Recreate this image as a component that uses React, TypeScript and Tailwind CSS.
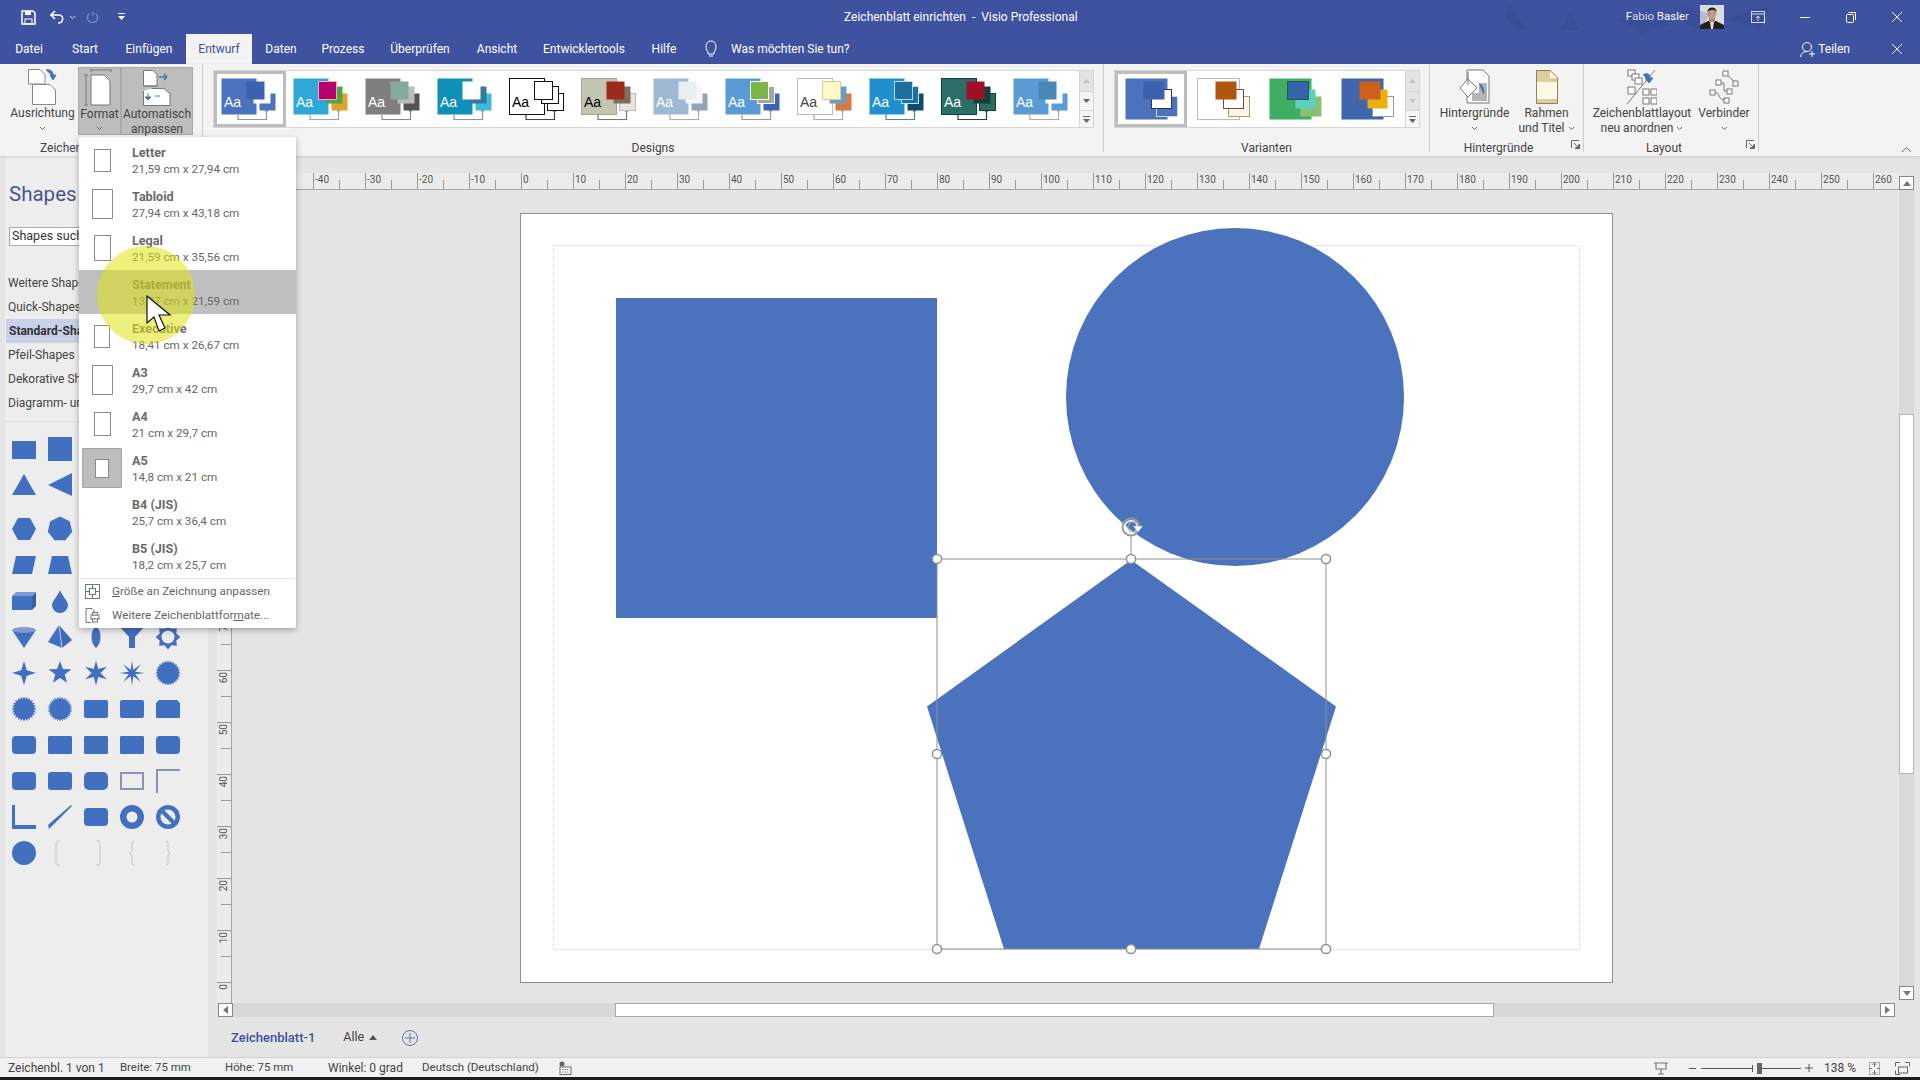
import React from "react";

const BLUE = "#4a72bd";
const PANEL = "#4270c0";

function starPts(n: number, R: number, r: number, c = 12, rot = -Math.PI / 2) {
  const out: string[] = [];
  for (let i = 0; i < n * 2; i++) {
    const a = rot + (i * Math.PI) / n;
    const q = i % 2 === 0 ? R : r;
    out.push(`${(c + q * Math.cos(a)).toFixed(2)},${(c + q * Math.sin(a)).toFixed(2)}`);
  }
  return out.join(" ");
}
function polyPts(n: number, R: number, c = 12) {
  const out: string[] = [];
  for (let i = 0; i < n; i++) {
    const a = -Math.PI / 2 + (i * 2 * Math.PI) / n;
    out.push(`${(c + R * Math.cos(a)).toFixed(2)},${(c + R * Math.sin(a)).toFixed(2)}`);
  }
  return out.join(" ");
}

const R = (rx: number, y = 3, h = 18) => <rect x="0" y={y} width="24" height={h} rx={rx} fill={PANEL} />;
const Pg = (p: string) => <polygon points={p} fill={PANEL} />;

const topShapes: React.ReactNode[] = [
  R(0, 4, 18), R(0, 0, 24), R(0), R(0), R(0),
  Pg("12,1 24,22 0,22"), Pg("24,0 24,23 0,12"), Pg("12,1 24,22 0,22"), R(0), R(0),
];
const shapes: React.ReactNode[] = [
  Pg("6,1 18,1 24,12 18,23 6,23 0,12"), Pg(polyPts(7, 12.5)), R(0), R(0), R(0),
  Pg("4,3 24,3 20,21 0,21"), Pg("4,3 20,3 24,21 0,21"), R(0), R(0), R(0),
  <g><polygon points="0,7 20,7 20,21 0,21" fill={PANEL} /><polygon points="0,7 4,3 24,3 20,7" fill="#7d9ad6" /><polygon points="20,7 24,3 24,17 20,21" fill="#3560a8" /></g>,
  <path d="M12 1 C14 7 20 12 20 16 A8 8 0 0 1 4 16 C4 12 10 7 12 1Z" fill={PANEL} />, R(0), R(0), R(0),
  <g><polygon points="0,5 24,5 12,23" fill={PANEL} /><ellipse cx="12" cy="5" rx="12" ry="3" fill="#7d9ad6" /></g>,
  <g><polygon points="11,0 0,17 14,23" fill={PANEL} /><polygon points="11,0 14,23 24,15" fill="#3f6ab8" /><line x1="11" y1="0" x2="14" y2="23" stroke="#fff" strokeWidth="0.6" /></g>,
  <path d="M12 1 C18 6 18 18 12 23 C6 18 6 6 12 1Z" fill={PANEL} />,
  <polygon points="0,2 24,2 15,12 15,23 9,23 9,12" fill={PANEL} />,
  <g><polygon points={starPts(8, 12.5, 9)} fill={PANEL} /><circle cx="12" cy="12" r="6.5" fill="#ececec" /></g>,
  Pg(starPts(4, 12, 4)), Pg(starPts(5, 12, 5)), Pg(starPts(6, 12.5, 4.5)), Pg(starPts(8, 12.5, 3.5)), Pg(starPts(24, 12.5, 10.5)),
  Pg(starPts(24, 12.5, 10)), Pg(starPts(32, 12.5, 10)), R(2), R(2), <path d="M3 3H21L24 6V21H0V6Z" fill={PANEL} />,
  R(4), R(1), R(1), R(1), R(4),
  R(4), R(3), R(5),
  <rect x="1" y="4" width="22" height="16" fill="none" stroke="#8b92b8" strokeWidth="2" />,
  <path d="M1 24V1H24" fill="none" stroke="#8b92b8" strokeWidth="2" />,
  <polygon points="0,0 3,0 3,20 24,20 24,24 0,24" fill={PANEL} />,
  <polygon points="23,0 24,1 1,24 0,20" fill={PANEL} />,
  R(4),
  <g><circle cx="12" cy="12" r="12" fill={PANEL} /><circle cx="12" cy="12" r="5.5" fill="#ececec" /></g>,
  <g><circle cx="12" cy="12" r="12" fill={PANEL} /><circle cx="12" cy="12" r="7.5" fill="#ececec" /><polygon points="5,8 8,5 19,16 16,19" fill={PANEL} /></g>,
  <circle cx="12" cy="12" r="12" fill={PANEL} />,
];

function Sym({ children }: { children: React.ReactNode }) {
  return (
    <div className="flex h-9 w-9 items-center justify-center">
      <svg width="24" height="24" viewBox="0 0 24 24" overflow="visible">{children}</svg>
    </div>
  );
}

type T = { m: string; ms?: string; a: string; b: string; c: string; as?: string; bs?: string; cs?: string; t: string; l: string };
const themes: T[] = [
  { m: "#4a72bd", a: "#3c62ad", b: "#ffffff", c: "#4a72bd", t: "#fff", l: "#8a96b0" },
  { m: "#2ea8d8", a: "#b5006e", as: "#f3a8d0", b: "#4ea83f", c: "#e2a32a", t: "#fff", l: "#8fa9b5" },
  { m: "#7f7f7f", a: "#84aa9d", b: "#b9bdb9", c: "#545454", t: "#fff", l: "#888" },
  { m: "#1090b8", a: "#ffffff", b: "#2c7d9a", c: "#3dbbdc", t: "#fff", l: "#7f9aa5" },
  { m: "#ffffff", ms: "#111", a: "#ffffff", as: "#111", b: "#ffffff", bs: "#111", c: "#ffffff", cs: "#111", t: "#000", l: "#444" },
  { m: "#c3c5b0", ms: "#a5a595", a: "#9c2a1c", b: "#7a6f60", c: "#e9e5da", cs: "#bbb", t: "#000", l: "#777" },
  { m: "#9db9d4", a: "#e9eef3", b: "#f6f6f6", c: "#8ea5b9", t: "#fff", l: "#aaa" },
  { m: "#5b9bd5", a: "#79b547", as: "#fff", b: "#a5a5a5", bs: "#fff", c: "#4065b0", t: "#fff", l: "#999" },
  { m: "#ffffff", ms: "#bbb", a: "#fff8c8", as: "#d8d090", b: "#6c9cc4", c: "#d87a3c", t: "#444", l: "#aaa" },
  { m: "#1f8fcf", a: "#1c6f9f", as: "#a9e0f0", b: "#1c6f9f", bs: "#bfe8f5", c: "#0f4a6a", t: "#fff", l: "#5d7f90" },
  { m: "#2b6e68", ms: "#0f3f3a", a: "#a00f2a", b: "#12403c", c: "#2c6e58", cs: "#12403c", t: "#fff", l: "#2c3f3f" },
  { m: "#5b9bd5", a: "#4a86b8", b: "#ffffff", c: "#5b9bd5", t: "#fff", l: "#aaa" },
];

function Thumb({ th, selected }: { th: T; selected?: boolean }) {
  return (
    <div className={`flex h-[56px] w-[72px] shrink-0 items-center justify-center ${selected ? "border-[3px] border-[#bdbdbd]" : ""}`}>
      <svg width="72" height="56" viewBox="3 0 72 56" className={selected ? "-m-[3px]" : ""}>
        <rect x="10.5" y="7.5" width="35" height="36" fill={th.m} stroke={th.ms ?? "none"} />
        <path d="M27 43.5V48.5H55.5V39" fill="none" stroke={th.l} strokeWidth="1.2" />
        <polygon points="55.5,37 53.5,40.5 57.5,40.5" fill={th.l} />
        <rect x="48.5" y="22.5" width="16" height="17" fill={th.c} stroke={th.cs ?? "none"} />
        <rect x="42.5" y="15.5" width="17" height="17" fill={th.b} stroke={th.bs ?? "none"} />
        <rect x="35.5" y="10.5" width="18" height="18" fill={th.a} stroke={th.as ?? "none"} />
        <text x="13" y="36" fontSize="14" fill={th.t} fontFamily="Liberation Sans, sans-serif">Aa</text>
      </svg>
    </div>
  );
}

const variants = [
  { m: "#4a72bd", a: "#3c62ad", b: "#ffffff", bs: "#22346a", c: "#4a72bd", cs: "#cfd8ee" },
  { m: "#ffffff", ms: "#bbbbbb", a: "#b0560f", b: "#ffffff", bs: "#7a4a30", c: "#fff6e8", cs: "#a89c70" },
  { m: "#3fae60", a: "#3565a8", as: "#245a50", b: "#5fd0c0", c: "#8bc070" },
  { m: "#3f66ad", a: "#d0601c", b: "#e8b010", c: "#ffffff", cs: "#999" },
];
function Variant({ v, selected }: { v: (typeof variants)[number]; selected?: boolean }) {
  return (
    <div className={`h-[56px] w-[72px] shrink-0 ${selected ? "outline outline-[3px] -outline-offset-[3px] outline-[#bdbdbd]" : ""}`}>
      <svg width="72" height="56" viewBox="0 0 72 56">
        <rect x="10.5" y="7.5" width="42" height="41" fill={v.m} stroke={v.ms ?? "none"} />
        <rect x="41.5" y="25.5" width="21" height="20" fill={v.c} stroke={v.cs ?? "none"} />
        <rect x="36.5" y="18.5" width="20" height="19" fill={v.b} stroke={v.bs ?? "none"} />
        <rect x="28.5" y="10.5" width="21" height="18" fill={v.a} stroke={v.as ?? "none"} />
      </svg>
    </div>
  );
}

const Chev = ({ c = "#666" }: { c?: string }) => (
  <svg width="7" height="5" viewBox="0 0 7 5" className="inline-block"><path d="M1 1L3.5 3.5L6 1" fill="none" stroke={c} strokeWidth="1" /></svg>
);

function GalleryScroll({ dim }: { dim?: boolean }) {
  return (
    <div className="ml-auto flex h-full w-[14px] shrink-0 flex-col border-l border-[#d5d5d5] bg-[#f5f5f5]">
      <div className="flex h-[21px] items-center justify-center border-b border-[#d5d5d5] bg-[#e4e4e4]">
        <svg width="7" height="5"><polygon points="3.5,0 7,4 0,4" fill="#c4c4c4" /></svg>
      </div>
      <div className={`flex h-[19px] items-center justify-center border-b border-[#d5d5d5] ${dim ? "bg-[#e4e4e4]" : ""}`}>
        <svg width="7" height="5"><polygon points="0,0 7,0 3.5,4" fill={dim ? "#c4c4c4" : "#666"} /></svg>
      </div>
      <div className="flex flex-1 items-center justify-center">
        <svg width="7" height="7"><rect width="7" height="1" fill="#666" /><polygon points="0,3 7,3 3.5,7" fill="#666" /></svg>
      </div>
    </div>
  );
}

function Launcher() {
  return (
    <svg width="9" height="9" viewBox="0 0 9 9" className="absolute bottom-[3px] right-[3px]">
      <path d="M0.5 8V0.5H8M8.5 4V8.5H4M3 3L7.5 7.5M7.5 4.5V7.5H4.5" fill="none" stroke="#666" strokeWidth="1" />
    </svg>
  );
}

function BigBtn({ w, icon, l1, l2, chevInline, active }: { w: string; icon: React.ReactNode; l1: string; l2?: string; chevInline?: boolean; active?: boolean }) {
  return (
    <div className={`flex ${w} h-[68px] shrink-0 flex-col items-center ${active ? "border border-[#a9a9a9] bg-[#bdbdbd]" : ""}`}>
      <div className="mt-[2px] flex h-[36px] items-center justify-center">{icon}</div>
      <div className="mt-[1px] h-[15px] whitespace-nowrap leading-[15px]">{l1}</div>
      <div className="flex h-[14px] items-center gap-[3px] whitespace-nowrap leading-[14px]">
        {l2}
        {(!l2 || chevInline) && <Chev />}
      </div>
    </div>
  );
}

const paper = { fill: "#fff", stroke: "#777", strokeWidth: 1 };
const IcoAusrichtung = (
  <svg width="32" height="38" viewBox="0 0 32 38">
    <path d="M1.5 1.5H13L18 6.5V16H1.5Z" fill="#fff" stroke="#888" />
    <path d="M5.5 16.5H23L28.5 22V36.5H5.5Z" {...paper} stroke="#888" />
    <path d="M19 2C24 1 27 4 26 9M26 12L23 7H29Z" fill="#3d79b8" stroke="#3d79b8" />
  </svg>
);
const IcoFormat = (
  <svg width="32" height="38" viewBox="0 0 32 38">
    <path d="M7 1H27M7 0V3M27 0V3M2 6V36M0 6H4M0 36H4" stroke="#777" fill="none" />
    <path d="M7 6H20L26 12V36H7Z" {...paper} />
  </svg>
);
const IcoAuto = (
  <svg width="30" height="38" viewBox="0 0 30 38">
    <path d="M1.5 1.5H11L15 5.5V17H1.5Z" {...paper} />
    <path d="M1.5 17H15M9.5 19.5H22L28 25V36.5H1.5V22" fill="#fff" stroke="#777" />
    <path d="M17 8H25M25 8L22 5M25 8L22 11" stroke="#3d79b8" fill="none" strokeWidth="1.5" />
    <path d="M6 24V31M6 31L3 28H9Z" stroke="#3d79b8" fill="#3d79b8" strokeWidth="1" />
    <path d="M13 27H18" stroke="#3d79b8" />
  </svg>
);
const IcoHintergrund = (
  <svg width="32" height="36" viewBox="0 0 32 36">
    <path d="M8 1H24L30 7V34H8Z" fill="#fff" stroke="#777" />
    <g fill="#777"><rect x="20" y="14" width="8" height="18" opacity=".55" /><rect x="13" y="24" width="7" height="8" opacity=".55" /></g>
    <path d="M9 10L18 19L9 28L1 19Z" fill="#fff" stroke="#777" />
    <path d="M9 3V16" stroke="#777" />
    <path d="M20 14C24 16 26 20 25 26C23 22 21 18 20 14Z" fill="#3d79b8" />
  </svg>
);
const IcoRahmen = (
  <svg width="22" height="34" viewBox="0 0 22 34">
    <path d="M0.5 0.5H14L21.5 7.5V33.5H0.5Z" fill="#fdf9e6" stroke="#8b8360" />
    <rect x="1" y="8" width="20" height="4" fill="#ddcf9d" />
    <rect x="1" y="29" width="20" height="4" fill="#ddcf9d" />
    <rect x="1" y="1" width="13" height="7" fill="#ddcf9d" />
  </svg>
);
const IcoLayout = (
  <svg width="30" height="36" viewBox="0 0 30 36">
    <g fill="#fff" stroke="#777">
      <rect x="1" y="1" width="7" height="6" /><rect x="5" y="5" width="7" height="6" /><rect x="8" y="9" width="7" height="6" />
      <rect x="1" y="18" width="7" height="7" /><rect x="16" y="20" width="6" height="6" /><rect x="24" y="20" width="6" height="6" /><rect x="16" y="29" width="6" height="6" /><rect x="24" y="29" width="6" height="6" />
    </g>
    <path d="M0 35L28 1" stroke="#777" />
    <path d="M16 6C20 3 25 5 22 12M22 14L18 9H26Z" fill="#3d79b8" stroke="#3d79b8" />
  </svg>
);
const IcoVerbinder = (
  <svg width="30" height="34" viewBox="0 0 30 34">
    <g fill="#fff" stroke="#777">
      <rect x="14" y="1" width="5" height="5" /><rect x="24" y="11" width="5" height="5" /><rect x="7" y="10" width="5" height="5" /><rect x="18" y="19" width="5" height="5" /><rect x="1" y="20" width="5" height="5" /><rect x="15" y="28" width="5" height="5" />
    </g>
    <path d="M19 6L25 11M12 13H15V21H18M6 23C10 20 9 30 15 30" fill="none" stroke="#777" />
  </svg>
);

const tabs: [string, string, boolean?][] = [
  ["Datei", "w-[58px]"], ["Start", "w-[54px]"], ["Einfügen", "w-[74px]"], ["Entwurf", "w-[66px]", true], ["Daten", "w-[58px]"], ["Prozess", "w-[66px]"],
  ["Überprüfen", "w-[88px]"], ["Ansicht", "w-[66px]"], ["Entwicklertools", "w-[108px]"], ["Hilfe", "w-[52px]"],
];

const menu: [string, string, number, number][] = [
  ["Letter", "21,59 cm x 27,94 cm", 17, 23],
  ["Tabloid", "27,94 cm x 43,18 cm", 21, 30],
  ["Legal", "21,59 cm x 35,56 cm", 17, 26],
  ["Statement", "13,97 cm x 21,59 cm", 0, 0],
  ["Executive", "18,41 cm x 26,67 cm", 16, 23],
  ["A3", "29,7 cm x 42 cm", 21, 30],
  ["A4", "21 cm x 29,7 cm", 17, 24],
  ["A5", "14,8 cm x 21 cm", 14, 19],
  ["B4 (JIS)", "25,7 cm x 36,4 cm", 0, 0],
  ["B5 (JIS)", "18,2 cm x 25,7 cm", 0, 0],
];

const hTicks = Array.from({ length: 32 }, (_, i) => -50 + i * 10);
const vTicks = Array.from({ length: 16 }, (_, i) => 150 - i * 10);

const handles: [number, number][] = [
  [417, 346], [611, 346], [806, 346], [417, 541], [806, 541], [417, 736], [611, 736], [806, 736],
];

export default function App() {
  return (
    <div className="relative flex h-[1080px] w-[1920px] flex-col overflow-hidden bg-[#e5e5e5] font-['Roboto',sans-serif] text-[12px] text-[#444]">
      {/* Title bar */}
      <div className="relative flex h-[34px] shrink-0 items-center bg-[#3e529f] text-white">
        <div className="ml-[21px] flex items-center">
          <svg width="15" height="15" viewBox="0 0 15 15"><path d="M1 1H12L14 3V14H1Z" fill="none" stroke="#fff" strokeWidth="1.5" /><rect x="4" y="1" width="6" height="4" fill="#fff" /><rect x="4" y="9" width="7" height="5" fill="none" stroke="#fff" /></svg>
          <svg width="15" height="14" viewBox="0 0 15 14" className="ml-[14px]"><path d="M5 1L1 5L5 9M1 5H9C14 5 14 13 8 13" fill="none" stroke="#fff" strokeWidth="1.6" /></svg>
          <span className="ml-[4px]"><Chev c="#d5daf0" /></span>
          <svg width="13" height="14" viewBox="0 0 13 14" className="ml-[10px]"><path d="M7 1.5V5.5M9.5 3.5C13 6 12 12.5 6.5 12.5C1 12.5 0 6 3.5 3.5" fill="none" stroke="#7587c4" strokeWidth="1.5" /></svg>
          <svg width="7" height="8" viewBox="0 0 7 8" className="ml-[19px]"><rect width="7" height="1" fill="#fff" /><polygon points="0,3 7,3 3.5,7" fill="#fff" /></svg>
        </div>
        <div className="absolute left-[844px] top-[8px] whitespace-pre">Zeichenblatt einrichten  -  Visio Professional</div>
        <svg width="300" height="34" className="absolute left-[1480px] top-0 opacity-20">
          <path d="M30 5L45 28L38 32L25 15ZM80 30L90 12L100 30ZM140 20L170 8L190 25L160 34ZM200 4L230 14L220 30L205 24ZM245 18L290 6L280 30Z" fill="#2a3b80" />
        </svg>
        <div className="ml-auto flex items-center">
          <span className="text-[11.5px]">Fabio Basler</span>
          <svg width="24" height="24" viewBox="0 0 24 24" className="ml-[11px]">
            <rect width="24" height="24" fill="#d8dde2" />
            <path d="M0 24V20L8 16H16L24 20V24Z" fill="#1e2022" />
            <polygon points="10,16 14,16 13,24 11,24" fill="#e6e6e6" />
            <rect x="9" y="12" width="6" height="5" fill="#b5886c" />
            <ellipse cx="12" cy="8" rx="4.5" ry="6" fill="#c69a7e" />
            <path d="M7.5 7C7 2 17 1 16.5 7C15 4 10 4 7.5 7Z" fill="#231a14" />
          </svg>
          <svg width="14" height="12" viewBox="0 0 14 12" className="ml-[27px]"><rect x=".5" y=".5" width="13" height="11" fill="none" stroke="#fff" /><path d="M.5 3H13.5M7 10V5M5 7L7 5L9 7" stroke="#fff" fill="none" /></svg>
          <svg width="10" height="1" className="ml-[35px]"><rect width="10" height="1" fill="#fff" /></svg>
          <svg width="10" height="11" viewBox="0 0 10 11" className="ml-[36px]"><rect x=".5" y="2.5" width="7" height="8" rx="1" fill="none" stroke="#fff" /><path d="M2.5 .5H9.5V8" fill="none" stroke="#fff" /></svg>
          <svg width="10" height="10" viewBox="0 0 10 10" className="ml-[36px] mr-[18px]"><path d="M0 0L10 10M10 0L0 10" stroke="#fff" /></svg>
        </div>
      </div>

      {/* Tabs */}
      <div className="flex h-[30px] shrink-0 items-center bg-[#3e529f] text-white">
        {tabs.map(([t, w, act]) => (
          <div key={t} className={`flex h-full shrink-0 items-center justify-center pb-[1px] ${w} ${act ? "bg-[#f3f3f3] text-[#3e529f]" : ""}`}>{t}</div>
        ))}
        <svg width="14" height="18" viewBox="0 0 14 18" className="ml-[14px]"><path d="M4 12C1 9 1 1 7 1C13 1 13 9 10 12V14H4ZM5 16H9" fill="none" stroke="#fff" /></svg>
        <span className="ml-[13px]">Was möchten Sie tun?</span>
        <div className="ml-auto flex items-center">
          <svg width="16" height="17" viewBox="0 0 16 17"><circle cx="7" cy="6" r="4.5" fill="none" stroke="#fff" /><path d="M0.5 16C1 12 4 10.5 7 10.5M12 10V16M9 13H15" fill="none" stroke="#fff" /></svg>
          <span className="ml-[2px]">Teilen</span>
          <svg width="10" height="10" viewBox="0 0 10 10" className="ml-[42px] mr-[18px]"><path d="M0 0L10 10M10 0L0 10" stroke="#fff" /></svg>
        </div>
      </div>

      {/* Ribbon */}
      <div className="relative z-10 flex h-[92px] shrink-0 bg-[#f3f3f3] text-[12px] text-[#444] shadow-[0_1px_3px_rgba(0,0,0,0.12)]">
        <div className="flex h-[88px] w-[203px] shrink-0 flex-col border-r border-[#cfcfcf] pt-[3px]">
          <div className="flex h-[69px] pl-[7px]">
            <BigBtn w="w-[71px]" icon={IcoAusrichtung} l1="Ausrichtung" />
            <BigBtn w="w-[43px]" icon={IcoFormat} l1="Format" active />
            <BigBtn w="w-[72px]" icon={IcoAuto} l1="Automatisch" l2="anpassen" active />
          </div>
          <div className="mt-[6px] text-center text-[12px] leading-[14px]">Zeichenblatt einrichten</div>
        </div>
        <div className="flex h-[88px] w-[901px] shrink-0 flex-col items-center border-r border-[#cfcfcf] pt-[6px]">
          <div className="flex h-[59px] w-[881px] items-center border border-[#d5d5d5] bg-white">
            {themes.map((th, i) => <Thumb key={i} th={th} selected={i === 0} />)}
            <GalleryScroll />
          </div>
          <div className="mt-[13px] text-[12px] leading-[14px]">Designs</div>
        </div>
        <div className="flex h-[88px] w-[326px] shrink-0 flex-col items-center border-r border-[#cfcfcf] pt-[6px]">
          <div className="flex h-[59px] w-[306px] items-center border border-[#d5d5d5] bg-white">
            {variants.map((v, i) => <Variant key={i} v={v} selected={i === 0} />)}
            <GalleryScroll dim />
          </div>
          <div className="mt-[13px] text-[12px] leading-[14px]">Varianten</div>
        </div>
        <div className="relative flex h-[88px] w-[154px] shrink-0 flex-col items-center border-r border-[#cfcfcf] pt-[3px]">
          <div className="flex h-[69px]">
            <BigBtn w="w-[80px]" icon={IcoHintergrund} l1="Hintergründe" />
            <BigBtn w="w-[64px]" icon={IcoRahmen} l1="Rahmen" l2="und Titel" chevInline />
          </div>
          <div className="mt-[6px] pr-[16px] text-[12px] leading-[14px]">Hintergründe</div>
          <Launcher />
        </div>
        <div className="relative flex h-[88px] w-[175px] shrink-0 flex-col items-center border-r border-[#cfcfcf] pt-[3px]">
          <div className="flex h-[69px]">
            <BigBtn w="w-[106px]" icon={IcoLayout} l1="Zeichenblattlayout" l2="neu anordnen" chevInline />
            <BigBtn w="w-[58px]" icon={IcoVerbinder} l1="Verbinder" />
          </div>
          <div className="mt-[6px] pr-[14px] text-[12px] leading-[14px]">Layout</div>
          <Launcher />
        </div>
        <div className="flex flex-1 items-end justify-end pb-[3px] pr-[8px]">
          <svg width="11" height="7" viewBox="0 0 11 7"><path d="M1 6L5.5 1.5L10 6" fill="none" stroke="#666" /></svg>
        </div>
      </div>

      {/* Main */}
      <div className="flex min-h-0 flex-1">
        {/* Shapes panel */}
        <div className="ml-[5px] flex w-[203px] shrink-0 flex-col bg-[#ededed] pt-[26px] text-[12px]">
          <div className="ml-[4px] h-[23px] text-[20.5px] leading-[24px] text-[#47558f]">Shapes</div>
          <div className="ml-[4px] mr-[10px] mt-[22px] flex h-[19px] items-center border border-[#aaa] bg-white px-[2px] text-[12.5px] text-[#333]">Shapes suchen...</div>
          <div className="mt-[25px] flex flex-col">
            {["Weitere Shapes", "Quick-Shapes", "Standard-Shapes", "Pfeil-Shapes", "Dekorative Shapes", "Diagramm- und Mathematische Shapes"].map((n, i) => (
              <div key={n} className={`flex h-[24px] items-center overflow-hidden whitespace-nowrap pl-[3px] pr-[8px] ${i === 2 ? "mr-[8px] ml-[1px] bg-[#c8d0ea] pl-[2px] font-bold text-[#333]" : ""}`}>{n}</div>
            ))}
          </div>
          <div className="mr-[8px] mt-[6px] h-px bg-[#dcdcdc]" />
          <div className="ml-px mt-[9px] grid grid-cols-[repeat(5,36px)]">
            {topShapes.map((s, i) => <Sym key={i}>{s}</Sym>)}
          </div>
          <div className="ml-px mt-[8px] grid grid-cols-[repeat(5,36px)]">
            {shapes.map((s, i) => <Sym key={i}>{s}</Sym>)}
            <div className="col-span-2 flex h-9 items-center justify-center">
              <svg width="46" height="26" viewBox="0 0 46 26"><path d="M5 1H2Q1 1 1 3V23Q1 25 2 25H5M41 1H44Q45 1 45 3V23Q45 25 44 25H41" fill="none" stroke="#c5c5c5" /></svg>
            </div>
            <div className="col-span-2 flex h-9 items-center justify-center">
              <svg width="42" height="26" viewBox="0 0 42 26"><path d="M5 1Q3 1 3 3V11L1 13L3 15V23Q3 25 5 25M37 1Q39 1 39 3V11L41 13L39 15V23Q39 25 37 25" fill="none" stroke="#c5c5c5" /></svg>
            </div>
          </div>
        </div>

        {/* Centre */}
        <div className="flex min-w-0 flex-1 flex-col">
          <div className="h-[17px] shrink-0" />
          <div className="flex h-[17px] shrink-0">
            <div className="ml-[24px] flex min-w-0 flex-1 overflow-hidden border-b border-[#a5a5a5] bg-[#ebebeb] pl-[29px] text-[10px] leading-[14px] text-[#555]">
              {hTicks.map((v) => (
                <div key={v} className="flex w-[52px] shrink-0">
                  <div className="h-full w-[26px] shrink-0 border-l border-[#999] pl-[1px]">{v}</div>
                  <div className="h-[9px] w-[26px] shrink-0 self-end border-l border-[#999]" />
                </div>
              ))}
            </div>
            <div className="mr-[6px] flex h-[14px] w-[15px] shrink-0 items-center justify-center self-end border border-[#888] bg-white">
              <svg width="8" height="5"><polygon points="4,0 8,5 0,5" fill="#777" /></svg>
            </div>
          </div>
          <div className="flex h-[813px] shrink-0">
            <div className="ml-[9px] flex w-[15px] shrink-0 flex-col overflow-hidden border-r border-[#a5a5a5] bg-[#ebebeb] pt-[12px] text-[10px] text-[#555]">
              {vTicks.map((v) => (
                <div key={v} className="flex h-[52px] shrink-0 flex-col">
                  <div className="flex h-[26px] shrink-0 items-start justify-center border-t border-[#999] pt-[1px]">
                    <span className="rotate-180 leading-[14px] [writing-mode:vertical-rl]">{v}</span>
                  </div>
                  <div className="h-[26px] w-[10px] shrink-0 self-end border-t border-[#999]" />
                </div>
              ))}
            </div>
            <div className="min-w-0 flex-1 overflow-hidden">
              <div className="ml-[288px] mt-[23px] h-[770px] w-[1093px] border border-[#8e8e8e] bg-white">
                <svg width="1091" height="768" viewBox="1 1 1091 768" overflow="visible">
                  <rect x="33.5" y="32.5" width="1026" height="704" fill="none" stroke="#d2d2d2" strokeDasharray="2 2" />
                  <rect x="96" y="85" width="321" height="320" fill={BLUE} />
                  <circle cx="715" cy="184" r="169" fill={BLUE} />
                  <polygon points="611,347 816,493.5 739,736 484,736 407,493.5" fill={BLUE} />
                  <rect x="417" y="346" width="389" height="390" fill="none" stroke="#909090" />
                  <line x1="611" y1="322" x2="611" y2="346" stroke="#909090" />
                  <circle cx="611" cy="314" r="8.5" fill="none" stroke="#999" strokeWidth="2" />
                  <circle cx="611" cy="314" r="6.3" fill="none" stroke="#fff" strokeWidth="1.6" />
                  <path d="M616 310A5 5 0 1 0 616 318" fill="none" stroke="#aaa" strokeWidth="1.2" />
                  <polygon points="613,313 623,313 618,319" fill="#fff" stroke="#999" strokeWidth=".6" />
                  {handles.map(([x, y]) => (
                    <circle key={`${x}-${y}`} cx={x} cy={y} r="4.6" fill="#fff" stroke="#909090" strokeWidth="1.5" />
                  ))}
                </svg>
              </div>
            </div>
            <div className="mr-[6px] flex w-[15px] shrink-0 flex-col">
              <div className="h-[796px] bg-[#d9d9d9] pt-[224px]">
                <div className="h-[360px] border border-[#b5b5b5] bg-white" />
              </div>
              <div className="flex h-[14px] items-center justify-center border border-[#888] bg-white">
                <svg width="8" height="5"><polygon points="0,0 8,0 4,5" fill="#777" /></svg>
              </div>
            </div>
          </div>
          <div className="ml-[10px] mr-[25px] flex h-[14px] shrink-0 bg-[#d8d8d8]">
            <div className="flex w-[15px] shrink-0 items-center justify-center border border-[#888] bg-white">
              <svg width="5" height="8"><polygon points="5,0 5,8 0,4" fill="#777" /></svg>
            </div>
            <div className="ml-[382px] w-[879px] shrink-0 border border-[#aaa] bg-white" />
            <div className="ml-auto flex w-[15px] shrink-0 items-center justify-center border border-[#888] bg-white">
              <svg width="5" height="8"><polygon points="0,0 5,4 0,8" fill="#777" /></svg>
            </div>
          </div>
          <div className="flex h-[40px] shrink-0 items-center pt-px text-[13px]">
            <span className="ml-[23px] font-medium text-[#3e529f]">Zeichenblatt-1</span>
            <span className="ml-[28px] text-[12.5px]">Alle</span>
            <svg width="8" height="5" className="ml-[5px]"><polygon points="4,0 8,5 0,5" fill="#555" /></svg>
            <svg width="16" height="16" viewBox="0 0 16 16" className="ml-[25px]"><circle cx="8" cy="8" r="7.5" fill="none" stroke="#6470a8" /><path d="M8 3V13M3 8H13" stroke="#6470a8" /></svg>
          </div>
        </div>
      </div>

      {/* Status bar */}
      <div className="flex h-[20px] shrink-0 items-center border-t border-[#d0d0d0] bg-[#f1f1f1] pt-px text-[12px] text-[#444]">
        <span className="w-[120px] shrink-0 pl-[8px]">Zeichenbl. 1 von 1</span>
        <span className="w-[105px] shrink-0 text-[11.4px]">Breite: 75 mm</span>
        <span className="w-[103px] shrink-0 text-[11.4px]">Höhe: 75 mm</span>
        <span className="w-[94px] shrink-0">Winkel: 0 grad</span>
        <span className="w-[137px] shrink-0 text-[11.5px]">Deutsch (Deutschland)</span>
        <svg width="13" height="14" viewBox="0 0 13 14"><circle cx="3" cy="3" r="2.5" fill="#666" /><rect x="1" y="6" width="11" height="7.5" fill="#fff" stroke="#666" /><path d="M3 8.5H10M3 11H10" stroke="#666" strokeDasharray="1.5 1" /></svg>
        <div className="ml-auto flex items-center">
          <svg width="14" height="13" viewBox="0 0 14 13"><path d="M0 1H14M2 1V7H12V1M7 7V12M4 12H10" fill="none" stroke="#777" strokeWidth="1.2" /></svg>
          <span className="ml-[21px] h-px w-[7px] bg-[#555]" />
          <div className="ml-[5px] flex h-[9px] w-[100px] items-center">
            <span className="h-px w-[51px] bg-[#555]" />
            <span className="h-[7px] w-px bg-[#555]" />
            <span className="ml-[4px] h-[11px] w-[5px] bg-[#666]" />
            <span className="h-px flex-1 bg-[#555]" />
          </div>
          <svg width="8" height="8" viewBox="0 0 8 8" className="ml-[4px]"><path d="M4 0V8M0 4H8" stroke="#555" /></svg>
          <span className="ml-[11px]">138 %</span>
          <svg width="11" height="13" viewBox="0 0 11 13" className="ml-[13px]"><rect x=".5" y=".5" width="10" height="12" fill="none" stroke="#aaa" /><path d="M5.5 1V5M3.5 3L5.5 1L7.5 3M5.5 12V8M3.5 10L5.5 12L7.5 10M0 6.5H3M8 6.5H11" fill="none" stroke="#777" /></svg>
          <svg width="15" height="13" viewBox="0 0 15 13" className="ml-[15px] mr-[10px]"><path d="M.5 4.5V.5H5M10 .5H14.5V4.5M.5 8.5V12.5H5" fill="none" stroke="#666" /><rect x="3.5" y="5" width="9" height="6" fill="none" stroke="#666" /></svg>
        </div>
      </div>
      <div className="h-[3px] shrink-0 bg-[#1c1c1c]" />

      {/* Format menu */}
      <div className="absolute left-[79px] top-[137px] z-20 flex w-[217px] flex-col rounded-[2px] bg-white pt-px text-[11.7px] text-[#666] shadow-[0_2px_6px_rgba(0,0,0,0.3)]">
        {menu.map(([t, d, w, h], i) => (
          <div key={t} className={`flex h-[44px] items-center pl-[3px] ${i === 3 ? "bg-[#bfbfbf]" : ""}`}>
            <div className={`flex h-[40px] w-[40px] shrink-0 items-center justify-center ${i === 7 ? "border border-[#a8a8a8] bg-[#bdbdbd]" : ""}`}>
              {w > 0 && <div className="border border-[#8a8a8a] bg-white" style={{ width: w, height: h }} />}
            </div>
            <div className="ml-[10px] flex flex-col pt-px leading-[17px]">
              <span className="text-[12.6px] font-bold text-[#6a6a6a]">{t}</span>
              <span>{d}</span>
            </div>
          </div>
        ))}
        <div className="mx-px h-px bg-[#e3e3e3]" />
        <div className="flex h-[24px] items-center pl-[6px] pt-px">
          <svg width="15" height="15" viewBox="0 0 15 15"><rect x=".5" y=".5" width="14" height="14" fill="#fff" stroke="#777" /><rect x="4.5" y="4.5" width="6" height="6" fill="#fff" stroke="#777" /><path d="M7.5 1V4M7.5 11V14M1 7.5H4M11 7.5H14" stroke="#3d79b8" /></svg>
          <span className="ml-[12px] whitespace-nowrap"><u>G</u>röße an Zeichnung anpassen</span>
        </div>
        <div className="flex h-[24px] items-center pl-[6px] pt-px">
          <svg width="15" height="15" viewBox="0 0 15 15"><path d="M1 .5H7L9 2.5V5M1 .5V14.5H6" fill="#fff" stroke="#777" /><rect x="6" y="7" width="8" height="4" fill="#fff" stroke="#777" /><rect x="7.5" y="4.5" width="5" height="2.5" fill="#fff" stroke="#777" /><rect x="7.5" y="11" width="5" height="3" fill="#fff" stroke="#777" /></svg>
          <span className="ml-[12px] whitespace-nowrap">Weitere Zeichenblattfor<u>m</u>ate...</span>
        </div>
        <div className="h-px" />
      </div>

      {/* Pointer highlight and cursor */}
      <div className="absolute left-[97px] top-[246px] z-30 h-[98px] w-[98px] rounded-full bg-[#dfe310] opacity-55" />
      <svg width="28" height="40" viewBox="0 0 28 40" className="absolute left-[146px] top-[295px] z-40">
        <polygon points="1,1 1,28 8,22 13,36 19,33 13,20 24,20" fill="#fff" stroke="#111" strokeWidth="1.2" />
      </svg>
    </div>
  );
}
